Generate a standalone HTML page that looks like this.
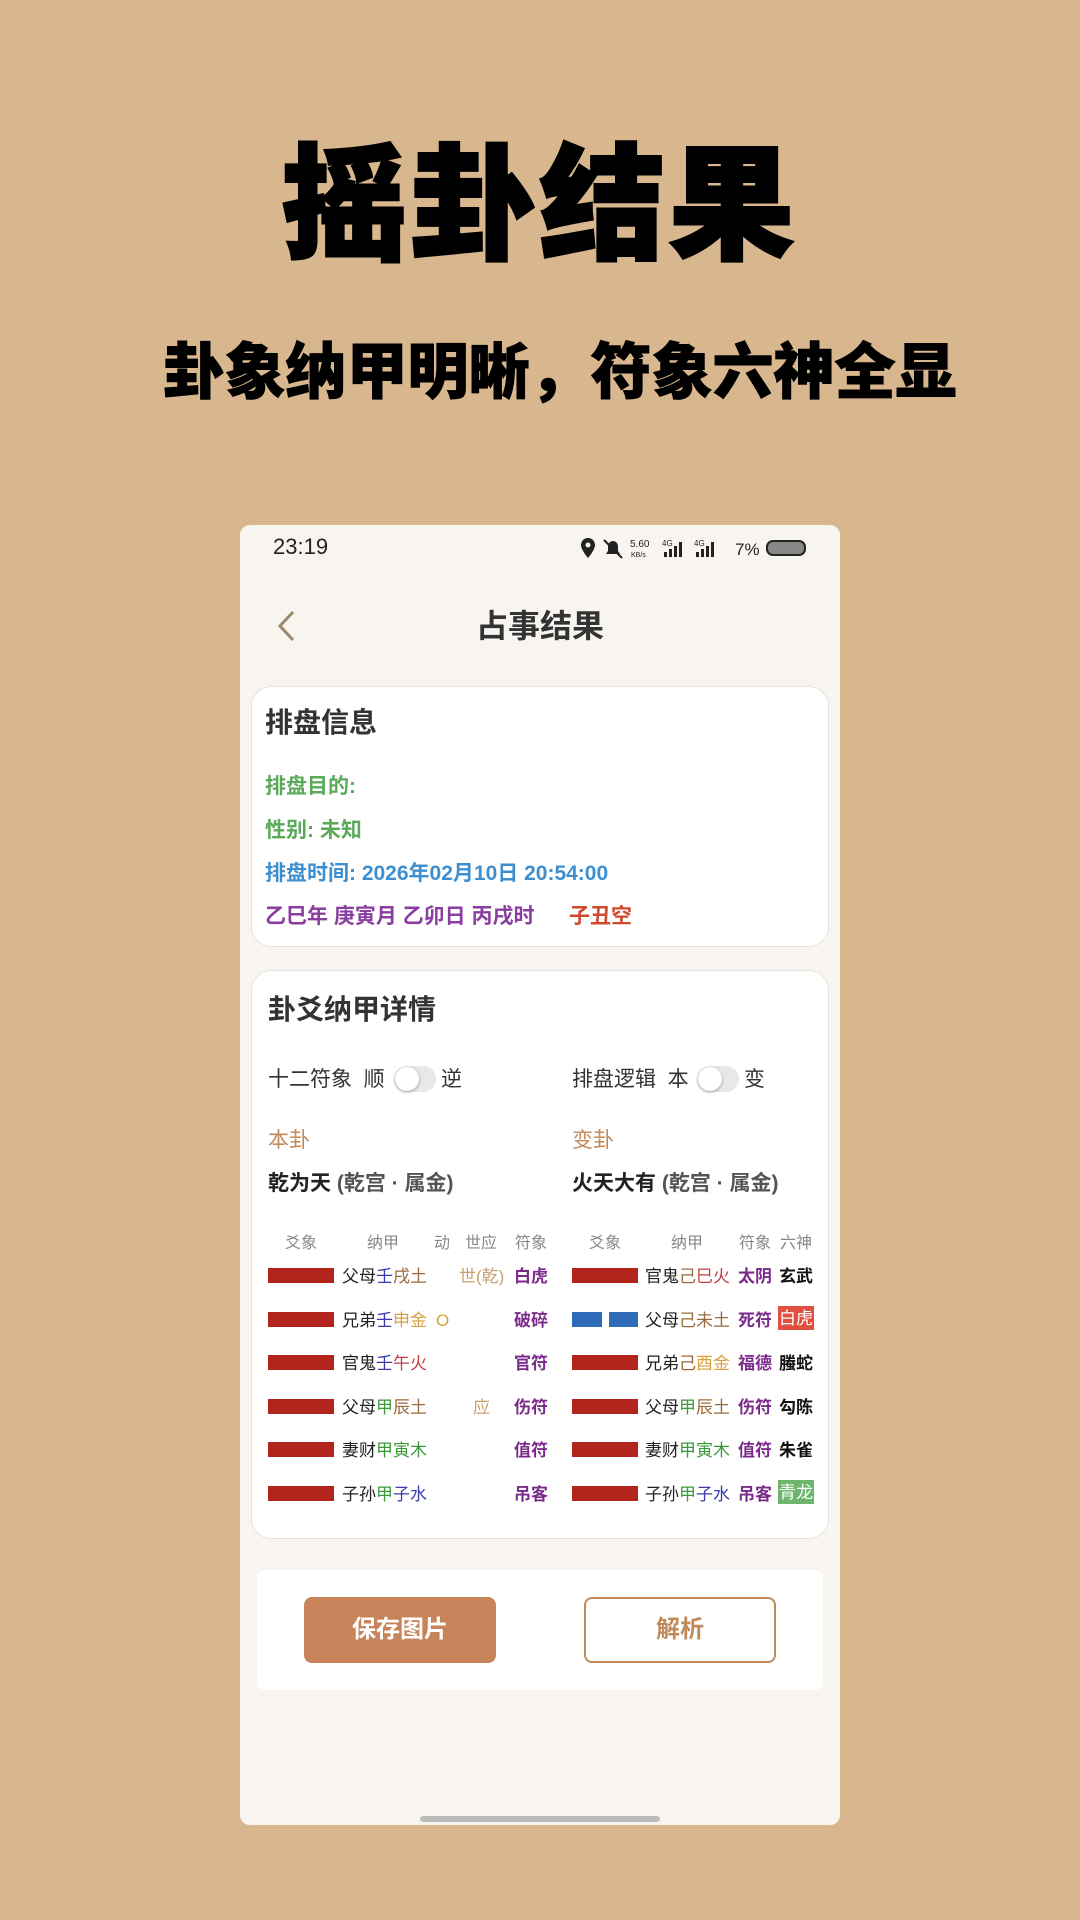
<!DOCTYPE html>
<html><head><meta charset="utf-8"><style>
*{margin:0;padding:0;box-sizing:border-box}
body{width:1080px;height:1920px;background:#d9b78e;position:relative;overflow:hidden;font-family:"Liberation Sans","Noto Sans CJK SC",sans-serif;color:#222}
.a{position:absolute;white-space:nowrap;line-height:1}
.t1{left:0;width:1080px;text-align:center;top:144px;font-size:125px;font-weight:900;color:#000;letter-spacing:4px;-webkit-text-stroke:3px #000}
.t2{left:20px;width:1080px;text-align:center;top:342px;font-size:61px;font-weight:900;color:#000;-webkit-text-stroke:1px #000}
.ph{position:absolute;left:240px;top:525px;width:600px;height:1300px;background:#f8f5f0;border-radius:10px}
.card{position:absolute;background:#fff;border:1px solid #e6e2dc;border-radius:20px}
.bar{position:absolute;height:15px;background:#b1251c}
.yb{position:absolute;height:15px;background:#2e6bb8}
.th{font-size:16px;color:#888;width:50px;text-align:center}
.r{font-size:17px;color:#222}
.fx{font-size:17px;color:#7a2a8a;font-weight:bold;width:50px;text-align:center}
.ls{font-size:17px;color:#111;font-weight:bold;width:36px;text-align:center}
.tg{position:absolute;width:42px;height:26px;border-radius:13px;background:#e8e8e8}
.tg:after{content:"";position:absolute;left:1px;top:1px;width:24px;height:24px;border-radius:12px;background:#fff;box-shadow:0 1px 3px rgba(0,0,0,.35)}
</style></head><body>
<div class="a t1">摇卦结果</div>
<div class="a t2">卦象纳甲明晰，符象六神全显</div>
<div class="ph"></div>
<div class="a" style="left:273px;top:536px;font-size:22px;color:#222">23:19</div>
<svg class="a" style="left:578px;top:536px" width="230" height="24" viewBox="0 0 230 24">
<path d="M10 2a7 7 0 0 0-7 7c0 5 7 13 7 13s7-8 7-13a7 7 0 0 0-7-7z" fill="#222"/><circle cx="10" cy="9" r="2.5" fill="#f8f5f0"/>
<path d="M28 18h14l-2-3v-5a5 5 0 0 0-10 0v5z" fill="#222"/><path d="M26 4l18 18" stroke="#222" stroke-width="2"/>
<text x="52" y="11" font-size="10" font-family="Liberation Sans" fill="#222">5.60</text><text x="53" y="21" font-size="7" font-family="Liberation Sans" fill="#222">KB/s</text>
<text x="84" y="10" font-size="8" font-family="Liberation Sans" fill="#222">4G</text>
<rect x="86" y="16" width="3" height="5" fill="#222"/><rect x="91" y="13" width="3" height="8" fill="#222"/><rect x="96" y="10" width="3" height="11" fill="#222"/><rect x="101" y="6" width="3" height="15" fill="#222"/>
<text x="116" y="10" font-size="8" font-family="Liberation Sans" fill="#222">4G</text>
<rect x="118" y="16" width="3" height="5" fill="#222"/><rect x="123" y="13" width="3" height="8" fill="#222"/><rect x="128" y="10" width="3" height="11" fill="#222"/><rect x="133" y="6" width="3" height="15" fill="#222"/>
<text x="157" y="19" font-size="17" font-family="Liberation Sans" fill="#222">7%</text>
<rect x="189" y="5" width="38" height="14" rx="6" fill="#888" stroke="#222" stroke-width="2"/>
</svg>
<svg class="a" style="left:276px;top:610px" width="20" height="32"><path d="M17 2L4 16l13 14" fill="none" stroke="#9a8a6a" stroke-width="3"/></svg>
<div class="a" style="left:0;width:1080px;text-align:center;top:610px;font-size:32px;font-weight:bold;color:#333">占事结果</div>

<div class="card" style="left:251px;top:686px;width:578px;height:261px"></div>
<div class="a" style="left:265px;top:709px;font-size:28px;font-weight:bold;color:#333">排盘信息</div>
<div class="a" style="left:265px;top:776px;font-size:21px;font-weight:bold;color:#5aaa5a">排盘目的:</div>
<div class="a" style="left:265px;top:820px;font-size:21px;font-weight:bold;color:#5aaa5a">性别: 未知</div>
<div class="a" style="left:265px;top:863px;font-size:21px;font-weight:bold;color:#3e8fd0">排盘时间: 2026年02月10日 20:54:00</div>
<div class="a" style="left:265px;top:906px;font-size:21px;font-weight:bold;color:#8a3fa0">乙巳年 庚寅月 乙卯日 丙戌时</div>
<div class="a" style="left:569px;top:906px;font-size:21px;font-weight:bold;color:#d04a30">子丑空</div>

<div class="card" style="left:251px;top:970px;width:578px;height:569px"></div>
<div class="a" style="left:268px;top:996px;font-size:28px;font-weight:bold;color:#333">卦爻纳甲详情</div>
<div class="a" style="left:268px;top:1069px;font-size:21px;color:#333">十二符象&nbsp; 顺</div>
<div class="tg" style="left:394px;top:1066px"></div>
<div class="a" style="left:441px;top:1069px;font-size:21px;color:#333">逆</div>
<div class="a" style="left:572px;top:1069px;font-size:21px;color:#333">排盘逻辑&nbsp; 本</div>
<div class="tg" style="left:697px;top:1066px"></div>
<div class="a" style="left:744px;top:1069px;font-size:21px;color:#333">变</div>
<div class="a" style="left:268px;top:1130px;font-size:21px;color:#c08a5a">本卦</div>
<div class="a" style="left:572px;top:1130px;font-size:21px;color:#c08a5a">变卦</div>
<div class="a" style="left:268px;top:1173px;font-size:21px;font-weight:bold;color:#222">乾为天 <span style="color:#555">(乾宫 · 属金)</span></div>
<div class="a" style="left:572px;top:1173px;font-size:21px;font-weight:bold;color:#222">火天大有 <span style="color:#555">(乾宫 · 属金)</span></div>

<div class="a th" style="left:276px;top:1236px">爻象</div>
<div class="a th" style="left:358px;top:1236px">纳甲</div>
<div class="a th" style="left:417px;top:1236px">动</div>
<div class="a th" style="left:456px;top:1236px">世应</div>
<div class="a th" style="left:506px;top:1236px">符象</div>
<div class="a th" style="left:580px;top:1236px">爻象</div>
<div class="a th" style="left:662px;top:1236px">纳甲</div>
<div class="a th" style="left:730px;top:1236px">符象</div>
<div class="a th" style="left:771px;top:1236px">六神</div>

<div class="bar" style="left:268px;top:1268px;width:66px"></div>
<div class="a r" style="left:342px;top:1268px">父母<span style="color:#3a3ab0">壬</span><span style="color:#9a6a3a">戌土</span></div>
<div class="a r" style="left:459px;top:1268px;color:#c8a070">世(乾)</div>
<div class="a fx" style="left:506px;top:1268px">白虎</div>
<div class="bar" style="left:572px;top:1268px;width:66px"></div>
<div class="a r" style="left:645px;top:1268px">官鬼<span style="color:#9a6a3a">己</span><span style="color:#c04040">巳火</span></div>
<div class="a fx" style="left:730px;top:1268px">太阴</div>
<div class="a ls" style="left:778px;top:1268px">玄武</div>

<div class="bar" style="left:268px;top:1312px;width:66px"></div>
<div class="a r" style="left:342px;top:1312px">兄弟<span style="color:#3a3ab0">壬</span><span style="color:#d8a040">申金</span></div>
<div class="a r" style="left:436px;top:1312px;color:#d8a040">O</div>
<div class="a fx" style="left:506px;top:1312px">破碎</div>
<div class="yb" style="left:572px;top:1312px;width:30px"></div><div class="yb" style="left:609px;top:1312px;width:29px"></div>
<div class="a r" style="left:645px;top:1312px">父母<span style="color:#9a6a3a">己未土</span></div>
<div class="a fx" style="left:730px;top:1312px">死符</div>
<div class="a ls" style="left:778px;top:1306px;background:#e05040;color:#fff;font-weight:normal;padding:4px 0 3px">白虎</div>

<div class="bar" style="left:268px;top:1355px;width:66px"></div>
<div class="a r" style="left:342px;top:1355px">官鬼<span style="color:#3a3ab0">壬</span><span style="color:#c04040">午火</span></div>
<div class="a fx" style="left:506px;top:1355px">官符</div>
<div class="bar" style="left:572px;top:1355px;width:66px"></div>
<div class="a r" style="left:645px;top:1355px">兄弟<span style="color:#9a6a3a">己</span><span style="color:#d8a040">酉金</span></div>
<div class="a fx" style="left:730px;top:1355px">福德</div>
<div class="a ls" style="left:778px;top:1355px">螣蛇</div>

<div class="bar" style="left:268px;top:1399px;width:66px"></div>
<div class="a r" style="left:342px;top:1399px">父母<span style="color:#3a9a3a">甲</span><span style="color:#9a6a3a">辰土</span></div>
<div class="a r" style="left:473px;top:1399px;color:#c8a070">应</div>
<div class="a fx" style="left:506px;top:1399px">伤符</div>
<div class="bar" style="left:572px;top:1399px;width:66px"></div>
<div class="a r" style="left:645px;top:1399px">父母<span style="color:#3a9a3a">甲</span><span style="color:#9a6a3a">辰土</span></div>
<div class="a fx" style="left:730px;top:1399px">伤符</div>
<div class="a ls" style="left:778px;top:1399px">勾陈</div>

<div class="bar" style="left:268px;top:1442px;width:66px"></div>
<div class="a r" style="left:342px;top:1442px">妻财<span style="color:#3a9a3a">甲寅木</span></div>
<div class="a fx" style="left:506px;top:1442px">值符</div>
<div class="bar" style="left:572px;top:1442px;width:66px"></div>
<div class="a r" style="left:645px;top:1442px">妻财<span style="color:#3a9a3a">甲寅木</span></div>
<div class="a fx" style="left:730px;top:1442px">值符</div>
<div class="a ls" style="left:778px;top:1442px">朱雀</div>

<div class="bar" style="left:268px;top:1486px;width:66px"></div>
<div class="a r" style="left:342px;top:1486px">子孙<span style="color:#3a9a3a">甲</span><span style="color:#3a3ab0">子水</span></div>
<div class="a fx" style="left:506px;top:1486px">吊客</div>
<div class="bar" style="left:572px;top:1486px;width:66px"></div>
<div class="a r" style="left:645px;top:1486px">子孙<span style="color:#3a9a3a">甲</span><span style="color:#3a3ab0">子水</span></div>
<div class="a fx" style="left:730px;top:1486px">吊客</div>
<div class="a ls" style="left:778px;top:1480px;background:#6db56d;color:#fff;font-weight:normal;padding:4px 0 3px">青龙</div>

<div style="position:absolute;left:257px;top:1570px;width:566px;height:120px;background:#fff;border-radius:8px"></div>
<div class="a" style="left:304px;top:1597px;width:192px;height:66px;background:#c8835a;border-radius:8px;color:#fff;font-size:24px;font-weight:bold;text-align:center;line-height:66px">保存图片</div>
<div class="a" style="left:584px;top:1597px;width:192px;height:66px;border:2px solid #c08a5a;border-radius:8px;color:#c08a5a;font-size:24px;font-weight:bold;text-align:center;line-height:62px">解析</div>
<div style="position:absolute;left:420px;top:1816px;width:240px;height:6px;border-radius:3px;background:#bbb"></div>
</body></html>
